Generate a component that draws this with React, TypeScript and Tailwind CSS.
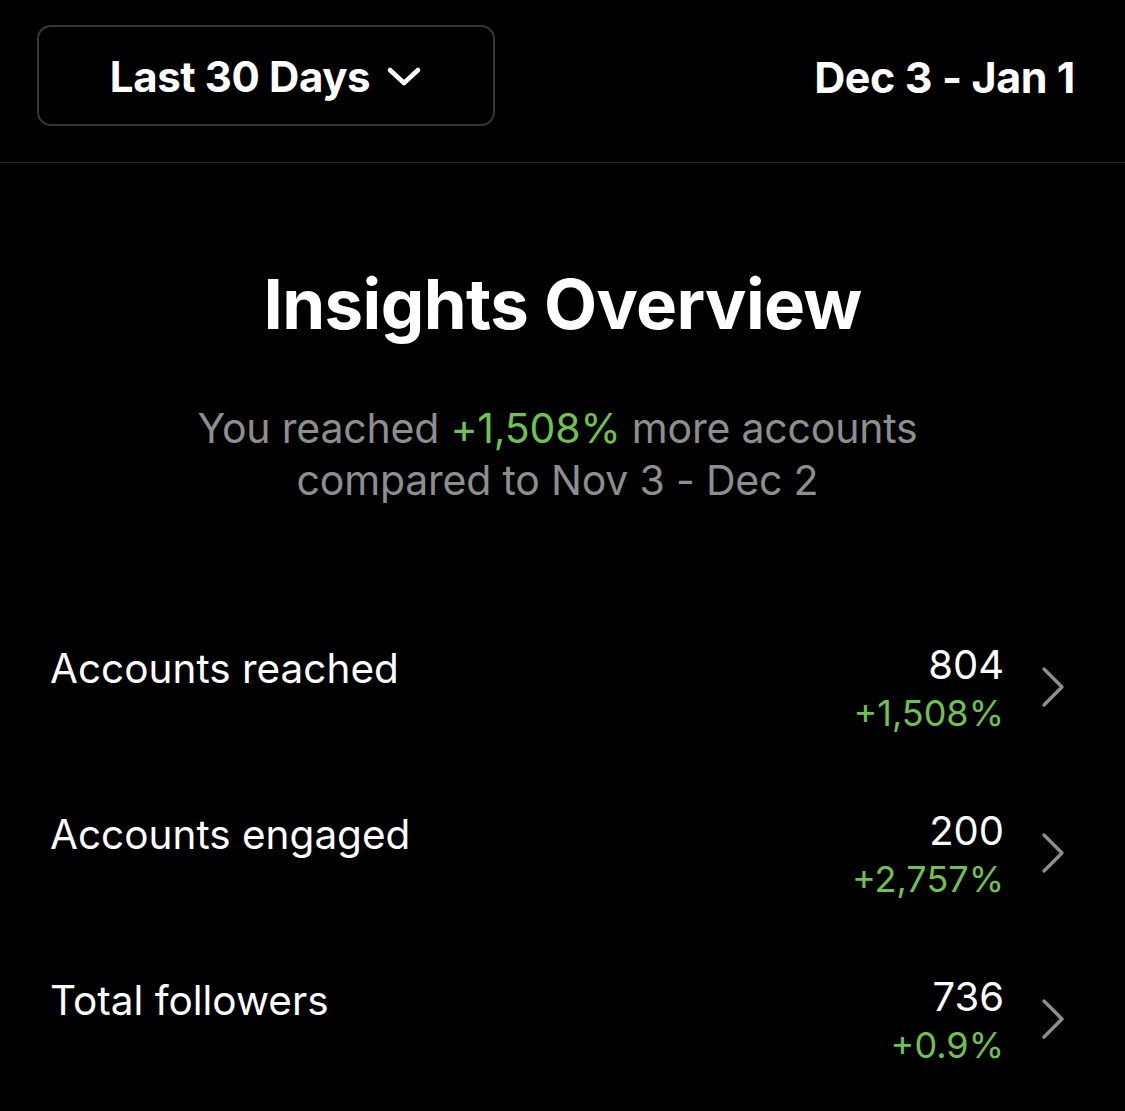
const rows = [
  { label: 'Accounts reached', value: '804', change: '+1,508%' },
  { label: 'Accounts engaged', value: '200', change: '+2,757%' },
  { label: 'Total followers', value: '736', change: '+0.9%' },
];

function Chevron() {
  return (
    <svg width="24" height="42" viewBox="0 0 24 42" fill="none" className="shrink-0">
      <path d="M3 3 L21 21 L3 39" stroke="#8e8e8e" strokeWidth="3.4" strokeLinecap="round" strokeLinejoin="round" />
    </svg>
  );
}

function DownChevron() {
  return (
    <svg width="36" height="22" viewBox="0 0 36 22" fill="none" className="shrink-0">
      <path d="M4 4 L18 17 L32 4" stroke="white" strokeWidth="4.6" strokeLinecap="round" strokeLinejoin="round" />
    </svg>
  );
}

export default function App() {
  return (
    <div className="w-[1125px] h-[1111px] bg-black text-white overflow-hidden" style={{ fontFamily: 'Inter, "Liberation Sans", sans-serif' }}>
      <div className="h-[163px] border-b border-[#262626] flex items-start justify-between pl-[37px] pr-[50px] pt-[25px]">
        <button className="w-[458px] h-[101px] rounded-[14px] border-2 border-[#363636] flex items-center justify-center gap-[16px] pt-[2px]">
          <span className="text-[42px] font-bold tracking-[-0.4px]">Last 30 Days</span>
          <DownChevron />
        </button>
        <div className="h-[101px] flex items-center pt-[4px] text-[43px] font-bold tracking-[-0.4px]">Dec 3 - Jan 1</div>
      </div>

      <div className="pt-[99px] flex flex-col items-center">
        <h1 className="text-[69px] font-bold leading-[84px] tracking-[-0.6px]">Insights Overview</h1>
        <p className="mt-[56px] pr-[10px] text-[41px] leading-[52px] text-[#8e8e8e] text-center tracking-[-0.2px]">
          You reached <span className="text-[#6fc24c]">+1,508%</span> more accounts
          <br />
          compared to Nov 3 - Dec 2
        </p>
      </div>

      <div className="mt-[126px] flex flex-col">
        {rows.map((r) => (
          <div key={r.label} className="h-[166px] flex items-start pl-[50px] pr-[60px]">
            <div className="flex-1 text-[40.5px] leading-[56px] pt-[9px]">{r.label}</div>
            <div className="flex flex-col items-end pt-[9px]">
              <span className="text-[40px] leading-[48px]">{r.value}</span>
              <span className="text-[36px] leading-[48px] text-[#6fc24c]">{r.change}</span>
            </div>
            <div className="ml-[37px] mt-[34px]">
              <Chevron />
            </div>
          </div>
        ))}
      </div>
    </div>
  );
}
